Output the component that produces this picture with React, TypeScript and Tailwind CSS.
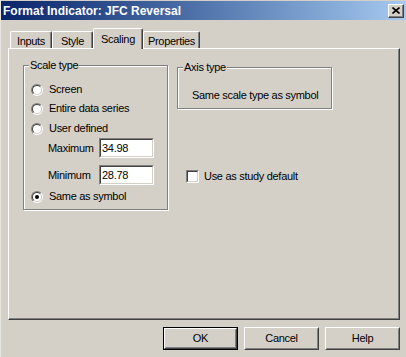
import React from "react";

const face = "bg-[#d4d0c8]";

function Radio({ label, checked }: { label: string; checked?: boolean }) {
  return (
    <div className="flex items-center h-[13px]">
      <div className="w-[12px] h-[12px] rounded-full border border-t-[#808080] border-l-[#808080] border-b-white border-r-white">
        <div className="w-full h-full rounded-full border border-t-[#404040] border-l-[#404040] border-b-[#d4d0c8] border-r-[#d4d0c8] bg-white flex items-center justify-center">
          {checked && <div className="w-[4px] h-[4px] rounded-full bg-black" />}
        </div>
      </div>
      <span className="ml-[6px] leading-none">{label}</span>
    </div>
  );
}

function NumberBox({ label, value }: { label: string; value: string }) {
  return (
    <div className="flex items-center h-[20px]">
      <span className="w-[51px] ml-[17px]">{label}</span>
      <div className="w-[55px] h-[20px] border border-t-[#808080] border-l-[#808080] border-b-white border-r-white">
        <div className="w-full h-full border border-t-[#404040] border-l-[#404040] border-b-[#d4d0c8] border-r-[#d4d0c8] bg-white flex items-center pl-[1px]">
          {value}
        </div>
      </div>
    </div>
  );
}

function Button({ label, isDefault }: { label: string; isDefault?: boolean }) {
  return (
    <div className={`w-[75px] h-[23px] ${isDefault ? "border border-black" : ""}`}>
      <div className="w-full h-full border border-t-white border-l-white border-b-[#404040] border-r-[#404040]">
        <div className="w-full h-full border border-t-[#d4d0c8] border-l-[#d4d0c8] border-b-[#808080] border-r-[#808080] flex items-center justify-center">
          {label}
        </div>
      </div>
    </div>
  );
}

function Tab({ label, width, selected }: { label: string; width: string; selected?: boolean }) {
  return (
    <div
      className={`${width} ${selected ? "h-[21px] -mb-[1px] z-10" : "h-[17px]"} ${face} relative border-t border-l border-t-white border-l-white border-r border-r-[#404040] rounded-t-[2px] shadow-[inset_-1px_0_0_#808080] flex justify-center ${selected ? "pt-[2px]" : "pt-[1px]"}`}
    >
      <span>{label}</span>
    </div>
  );
}

function GroupBox({ title, className, children }: { title: string; className: string; children: React.ReactNode }) {
  return (
    <div className={`relative border border-[#808080] shadow-[1px_1px_0_#ffffff,inset_1px_1px_0_#ffffff] ${className}`}>
      <span className={`absolute -top-[8px] left-[5px] px-[1px] ${face} leading-[14px]`}>{title}</span>
      {children}
    </div>
  );
}

export default function App() {
  return (
    <div className={`w-[406px] h-[357px] ${face} font-['Liberation_Sans',Arial,sans-serif] text-[11px] tracking-[-0.3px] text-black overflow-hidden flex flex-col border-l border-l-[#e8e6e1]`}>
      {/* title bar */}
      <div className="h-[19px] mt-[1px] flex items-center justify-between bg-gradient-to-r from-[#0a246a] to-[#a6caf0] pl-[2px] pr-[2px]">
        <span className="text-white font-bold text-[12px] tracking-normal">Format Indicator: JFC Reversal</span>
        <div className="w-[16px] h-[14px] border border-t-white border-l-white border-b-[#404040] border-r-[#404040] bg-[#d4d0c8] shadow-[inset_-1px_-1px_0_#808080] flex items-center justify-center">
          <svg width="8" height="7" viewBox="0 0 8 7">
            <path d="M0.5 0.5 L7.5 6.5 M7.5 0.5 L0.5 6.5" stroke="black" strokeWidth="1.6" />
          </svg>
        </div>
      </div>

      {/* tabs */}
      <div className="h-[28px] flex items-end pl-[9px]">
        <Tab label="Inputs" width="w-[42px]" />
        <Tab label="Style" width="w-[41px]" />
        <Tab label="Scaling" width="w-[50px]" selected />
        <Tab label="Properties" width="w-[57px]" />
      </div>

      {/* tab panel */}
      <div className="ml-[7px] w-[392px] h-[272px] border-t border-l border-t-white border-l-white border-r border-b border-r-[#404040] border-b-[#404040] shadow-[inset_-1px_-1px_0_#808080] flex items-start pt-[16px] pl-[14px]">
        <GroupBox title="Scale type" className="w-[145px] h-[145px] flex flex-col pt-[17px] pl-[7px]">
          <Radio label="Screen" />
          <div className="mt-[6px]">
            <Radio label="Entire data series" />
          </div>
          <div className="mt-[7px]">
            <Radio label="User defined" />
          </div>
          <div className="mt-[3px]">
            <NumberBox label="Maximum" value="34.98" />
          </div>
          <div className="mt-[7px]">
            <NumberBox label="Minimum" value="28.78" />
          </div>
          <div className="mt-[5px]">
            <Radio label="Same as symbol" checked />
          </div>
        </GroupBox>

        <div className="ml-[9px] flex flex-col">
          <GroupBox title="Axis type" className="w-[155px] h-[42px] mt-[2px] pl-[14px] pt-[19px]">
            <span className="leading-none">Same scale type as symbol</span>
          </GroupBox>
          <div className="mt-[59px] ml-[9px] flex items-center">
            <div className="w-[13px] h-[13px] border border-t-[#808080] border-l-[#808080] border-b-white border-r-white">
              <div className="w-full h-full border border-t-[#404040] border-l-[#404040] border-b-[#d4d0c8] border-r-[#d4d0c8] bg-white" />
            </div>
            <span className="ml-[5px]">Use as study default</span>
          </div>
        </div>
      </div>

      {/* buttons */}
      <div className="flex justify-end gap-[6px] mt-[7px] pr-[6px]">
        <Button label="OK" isDefault />
        <Button label="Cancel" />
        <Button label="Help" />
      </div>
    </div>
  );
}
